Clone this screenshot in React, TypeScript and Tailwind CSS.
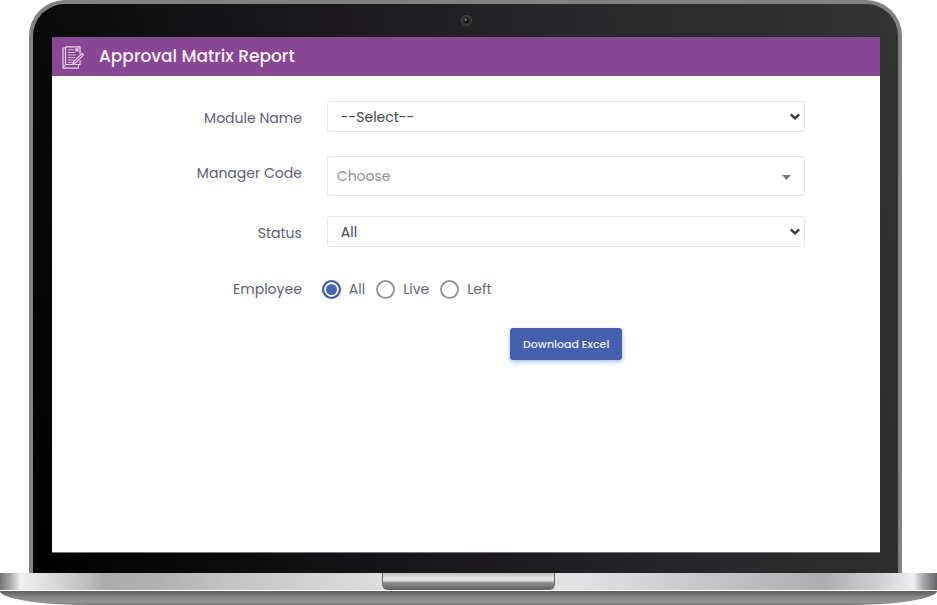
import { useState } from 'react';
import type { ReactNode } from 'react';

const employeeOptions = ['All', 'Live', 'Left'];

function Chevron() {
  return (
    <svg className="pointer-events-none absolute right-1 top-1/2 h-3 w-3 -translate-y-1/2" viewBox="0 0 12 12" fill="none" aria-hidden="true">
      <path d="M1.8 3.4 6 7.4l4.2-4" stroke="#343a46" strokeWidth="2.3" />
    </svg>
  );
}

function Caret() {
  return (
    <svg className="pointer-events-none absolute right-3 top-1/2 h-3 w-3 -translate-y-1/2" viewBox="0 0 12 12" aria-hidden="true">
      <path d="M1 5h9L5.500 10z" fill="#777" />
    </svg>
  );
}

function ReportIcon() {
  return (
    <svg className="h-6 w-6" viewBox="0 0 24 24" fill="none" stroke="#f0d2f0" strokeWidth="1.200" aria-hidden="true">
      <path d="M3.500 1.800H18v7M18 15.500v4H3.500V1.800" />
      <path d="M3.500 3H1v20.200h15.500v-3.500" />
      <path d="M1 20.800h2.500" />
      <path d="M6 4.800h6M6 7.500h7M6 10h8M6 12.500h7M6 15h6M6 17.500h5" strokeWidth="0.800" />
      <rect x="14" y="3.800" width="2" height="2" />
      <path d="m20 8.500 1.500 1.300-8 8-2.500 1 .9-2.500z" fill="#8b4992" />
    </svg>
  );
}

type FieldProps = {
  id: string;
  label: string;
  children: ReactNode;
};

function Field({ id, label, children }: FieldProps) {
  return (
    <div className="grid grid-cols-[250fr_504fr] items-start">
      <label htmlFor={id} className="pt-[7px] text-right text-[#5c5e74]">{label}</label>
      <div className="relative ml-[25px]">{children}</div>
    </div>
  );
}

function ReportForm() {
  const [employee, setEmployee] = useState('All');

  return (
    <form className="flex flex-col pt-[25px] pr-[9%] text-sm leading-5" onSubmit={(e) => e.preventDefault()}>
      <div className="flex flex-col">
        <Field id="module" label="Module Name">
          <select id="module" className="block h-[31px] w-full appearance-none rounded-[3px] border border-[#e4e6ec] bg-white px-[13px] text-[#45474f]">
            <option>--Select--</option>
          </select>
          <Chevron />
        </Field>

        <div className="mt-6 mb-5">
          <Field id="manager" label="Manager Code">
            <select id="manager" className="block h-10 w-full appearance-none rounded-[3px] border border-[#e4e6ec] bg-white px-[9px] text-[#929292]">
              <option>Choose</option>
            </select>
            <Caret />
          </Field>
        </div>

        <Field id="status" label="Status">
          <select id="status" className="block h-[31px] w-full appearance-none rounded-[3px] border border-[#e4e6ec] bg-white px-[13px] text-[#45474f]">
            <option>All</option>
          </select>
          <Chevron />
        </Field>
      </div>

      {/* employee filter */}
      <div role="radiogroup" aria-labelledby="employee" className="mt-8 grid grid-cols-[250fr_504fr] items-center">
        <span id="employee" className="text-right text-[#5c5e74]">Employee</span>
        <div className="ml-5 flex items-center gap-[11px]">
          {employeeOptions.map((option) => (
            <label key={option} className="flex items-center gap-2 text-[#666873]">
              <input
                type="radio"
                name="employee"
                value={option}
                checked={employee === option}
                onChange={() => setEmployee(option)}
                className="h-[19px] w-[19px] appearance-none rounded-full border-2 border-[#96979c] bg-white checked:border-[#4257a8] checked:bg-[#4366b4] checked:shadow-[inset_0_0_0_2px_#fff]"
              />
              {option}
            </label>
          ))}
        </div>
      </div>

      <div className="mt-[29px] grid grid-cols-[250fr_504fr]">
        <div className="col-start-2 ml-[25px] flex justify-center">
          <button type="submit" className="h-8 rounded-[3px] bg-[#465eae] px-[13px] text-[11px] font-medium text-[#e4f2ff] shadow-[0_2px_5px_#9fc0e4]">
            Download Excel
          </button>
        </div>
      </div>
    </form>
  );
}

function LaptopBase() {
  return (
    <div>
      <div className="flex h-[18px] justify-center border-b border-white bg-[linear-gradient(90deg,#737373_0%,#a5a5a5_1%,#f0f0f0_2.200%,#dedede_5%,#c8c8c8_8%,#acacac_11%,#b0b0b0_17%,#c2c2c2_24%,#d0d0d2_32%,#dedede_41%,#e2e1e3_62%,#d4d3d5_69%,#bebdbf_79%,#adacae_88%,#d1d0d2_94%,#efeef0_97.500%,#aaa9ab_98.500%,#656466_100%)]">
        <div className="h-[17px] w-[173px] rounded-b-[6px] border-x border-b border-[#666] bg-[linear-gradient(#bcbcbc,#e8e6e6_35%,#dddcdc_50%,#929090_60%,#666464)]" />
      </div>
      <div className="h-[14px] rounded-b-[90px_14px] bg-[linear-gradient(#606060,#898889_50%,#949395_80%,#777)]" />
    </div>
  );
}

export default function App() {
  return (
    <div className="flex min-h-screen flex-col overflow-hidden bg-white font-[Poppins,Inter,'Liberation_Sans',sans-serif]">
      {/* lid */}
      <div className="mr-[35px] ml-[29px] flex flex-1 flex-col rounded-t-[36px] border-4 border-b-0 border-[#818181] bg-[linear-gradient(75deg,#000_0%,#1c1a1d_45%,#29282a_70%,#333_100%)] pr-[18px] pb-5 pl-[19px]">
        <div className="flex h-[33px] items-center justify-center">
          <div className="flex h-[11px] w-[11px] items-center justify-center rounded-full border border-[#484848] bg-[#303030]">
            <div className="h-[5px] w-[5px] rounded-full bg-[radial-gradient(circle_at_35%_35%,#aaa,#000_45%)]" />
          </div>
        </div>

        {/* screen */}
        <main className="flex flex-1 flex-col border-b border-[#77757a] bg-white">
          <header className="flex h-[39px] items-center gap-[13px] border-b border-[#795080] bg-[#884694] px-[10px] pt-0.5">
            <ReportIcon />
            <h1 className="text-[17px] font-medium text-[#fff2ff]">Approval Matrix Report</h1>
          </header>
          <ReportForm />
        </main>
      </div>
      <LaptopBase />
    </div>
  );
}
